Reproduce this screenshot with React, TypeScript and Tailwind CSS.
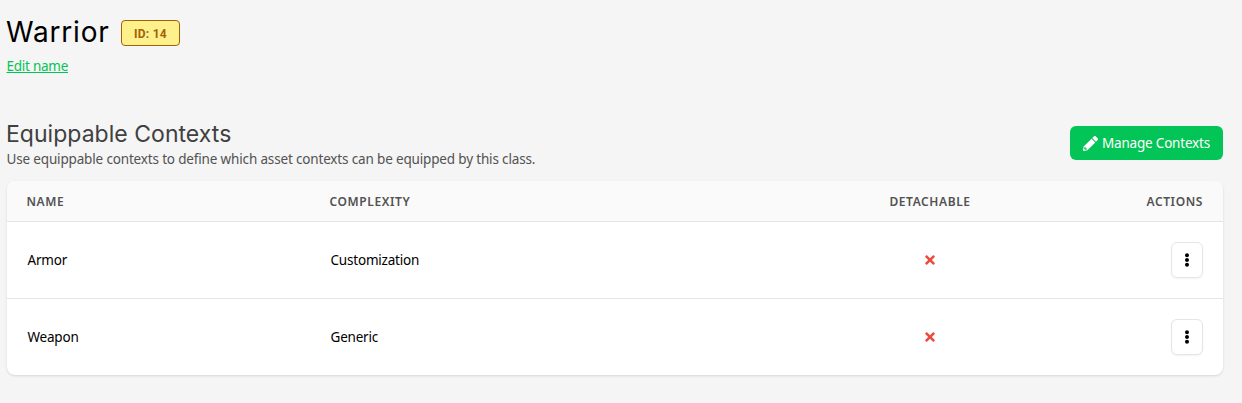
import { FaEllipsisV, FaTimes } from 'react-icons/fa';

interface EquippableContext {
  id: number;
  name: string;
  complexity: string;
  detachable: boolean;
}

const contexts: EquippableContext[] = [
  { id: 1, name: 'Armor', complexity: 'Customization', detachable: false },
  { id: 2, name: 'Weapon', complexity: 'Generic', detachable: false },
];

const headClass = 'px-5 pt-[2px] text-xs font-semibold leading-4 text-neutral-600';

function PencilIcon({ className }: { className?: string }) {
  return (
    <svg className={className} viewBox="0 0 512 512" fill="currentColor" fillRule="evenodd">
      <path d="M497.9 142.1l-46.1 46.1c-4.7 4.7-12.3 4.7-17 0l-111-111c-4.7-4.7-4.7-12.3 0-17l46.1-46.1c18.7-18.7 49.1-18.7 67.9 0l60.1 60.1c18.8 18.7 18.8 49.1 0 67.9z" />
      <path d="M284.2 99.8L21.6 362.4.4 483.9c-2.9 16.4 11.4 30.6 27.8 27.8l121.5-21.3 262.6-262.6c4.7-4.7 4.7-12.3 0-17l-111-111c-4.8-4.7-12.4-4.7-17.1 0zM88 424h48v36.3l-64.5 11.3-31.1-31.1L51.7 376H88v48z" />
    </svg>
  );
}

function ContextRow({ context }: { context: EquippableContext }) {
  return (
    <tr className="h-[77px] border-t border-neutral-200 text-[13.5px] text-black">
      <td className="px-[20.5px] pt-px">
        <span className="tracking-[-0.2px]">{context.name}</span>
      </td>
      <td className="px-[20.5px] pt-px">
        <span className="tracking-[-0.2px]">{context.complexity}</span>
      </td>
      <td className="px-5">
        {!context.detachable && <FaTimes className="mx-auto size-[14px] text-[#ea4b3e]" />}
      </td>
      <td className="px-5">
        <button className="ml-auto flex h-9 w-8 items-center justify-center rounded-md border border-neutral-200 bg-white shadow-xs">
          <FaEllipsisV className="size-[14px]" />
        </button>
      </td>
    </tr>
  );
}

export default function App() {
  return (
    <div className="min-h-screen bg-neutral-100 pt-3 pr-[19px] pl-[7px] font-['Noto_Sans',sans-serif]">
      <div className="flex h-10 items-center gap-3">
        <h1 className="w-[102px] font-['Inter',sans-serif] text-[28px] leading-10 whitespace-nowrap text-black">
          <span className="-ml-px tracking-[0.8px]">Warrior</span>
        </h1>
        <span className="mt-[2px] flex h-[26px] w-[59px] items-center justify-center rounded border border-[#a16207] bg-[#fef08a] pt-px font-['Roboto',sans-serif] text-xs font-bold text-[#a16207]">
          <span className="tracking-[0.25px]">ID: 14</span>
        </span>
      </div>
      <a href="#" className="mt-1 block h-5 text-[13.5px] leading-5 text-[#03c456] underline">
        <span className="-ml-[0.5px] tracking-[-0.25px]">Edit name</span>
      </a>

      <div className="mt-11 flex h-[50px] items-start justify-between">
        <div>
          <h2 className="font-['Inter',sans-serif] text-[23px] leading-7 text-neutral-700">
            <span className="-ml-px tracking-[0.03px]">Equippable Contexts</span>
          </h2>
          <p className="mt-px text-[13.5px] leading-5 whitespace-nowrap text-neutral-600">
            <span className="-ml-[0.5px] tracking-[-0.16px]">
              Use equippable contexts to define which asset contexts can be equipped by this class.
            </span>
          </p>
        </div>
        <button className="mt-[6px] flex h-[34px] w-[153px] items-center justify-center gap-1 rounded-md bg-[#03c456] text-[13.5px] whitespace-nowrap text-white">
          <PencilIcon className="size-[15px] shrink-0" />
          <span className="tracking-[-0.2px]">Manage Contexts</span>
        </button>
      </div>

      <div className="mt-[11px] overflow-hidden rounded-lg bg-white shadow-sm">
        <table className="w-full table-fixed border-collapse text-left">
          <colgroup>
            <col className="w-[303px]" />
            <col className="w-[505px]" />
            <col className="w-[230px]" />
            <col />
          </colgroup>
          <thead className="bg-neutral-50">
            <tr className="h-10">
              <th className={headClass}><span className="-ml-[0.5px] tracking-[0.6px]">NAME</span></th>
              <th className={headClass}><span className="-ml-[0.5px] tracking-[0.6px]">COMPLEXITY</span></th>
              <th className={`${headClass} text-center`}><span className="tracking-[0.6px]">DETACHABLE</span></th>
              <th className={`${headClass} text-right`}><span className="tracking-[0.6px]">ACTIONS</span></th>
            </tr>
          </thead>
          <tbody>
            {contexts.map((context) => (
              <ContextRow key={context.id} context={context} />
            ))}
          </tbody>
        </table>
      </div>
    </div>
  );
}
